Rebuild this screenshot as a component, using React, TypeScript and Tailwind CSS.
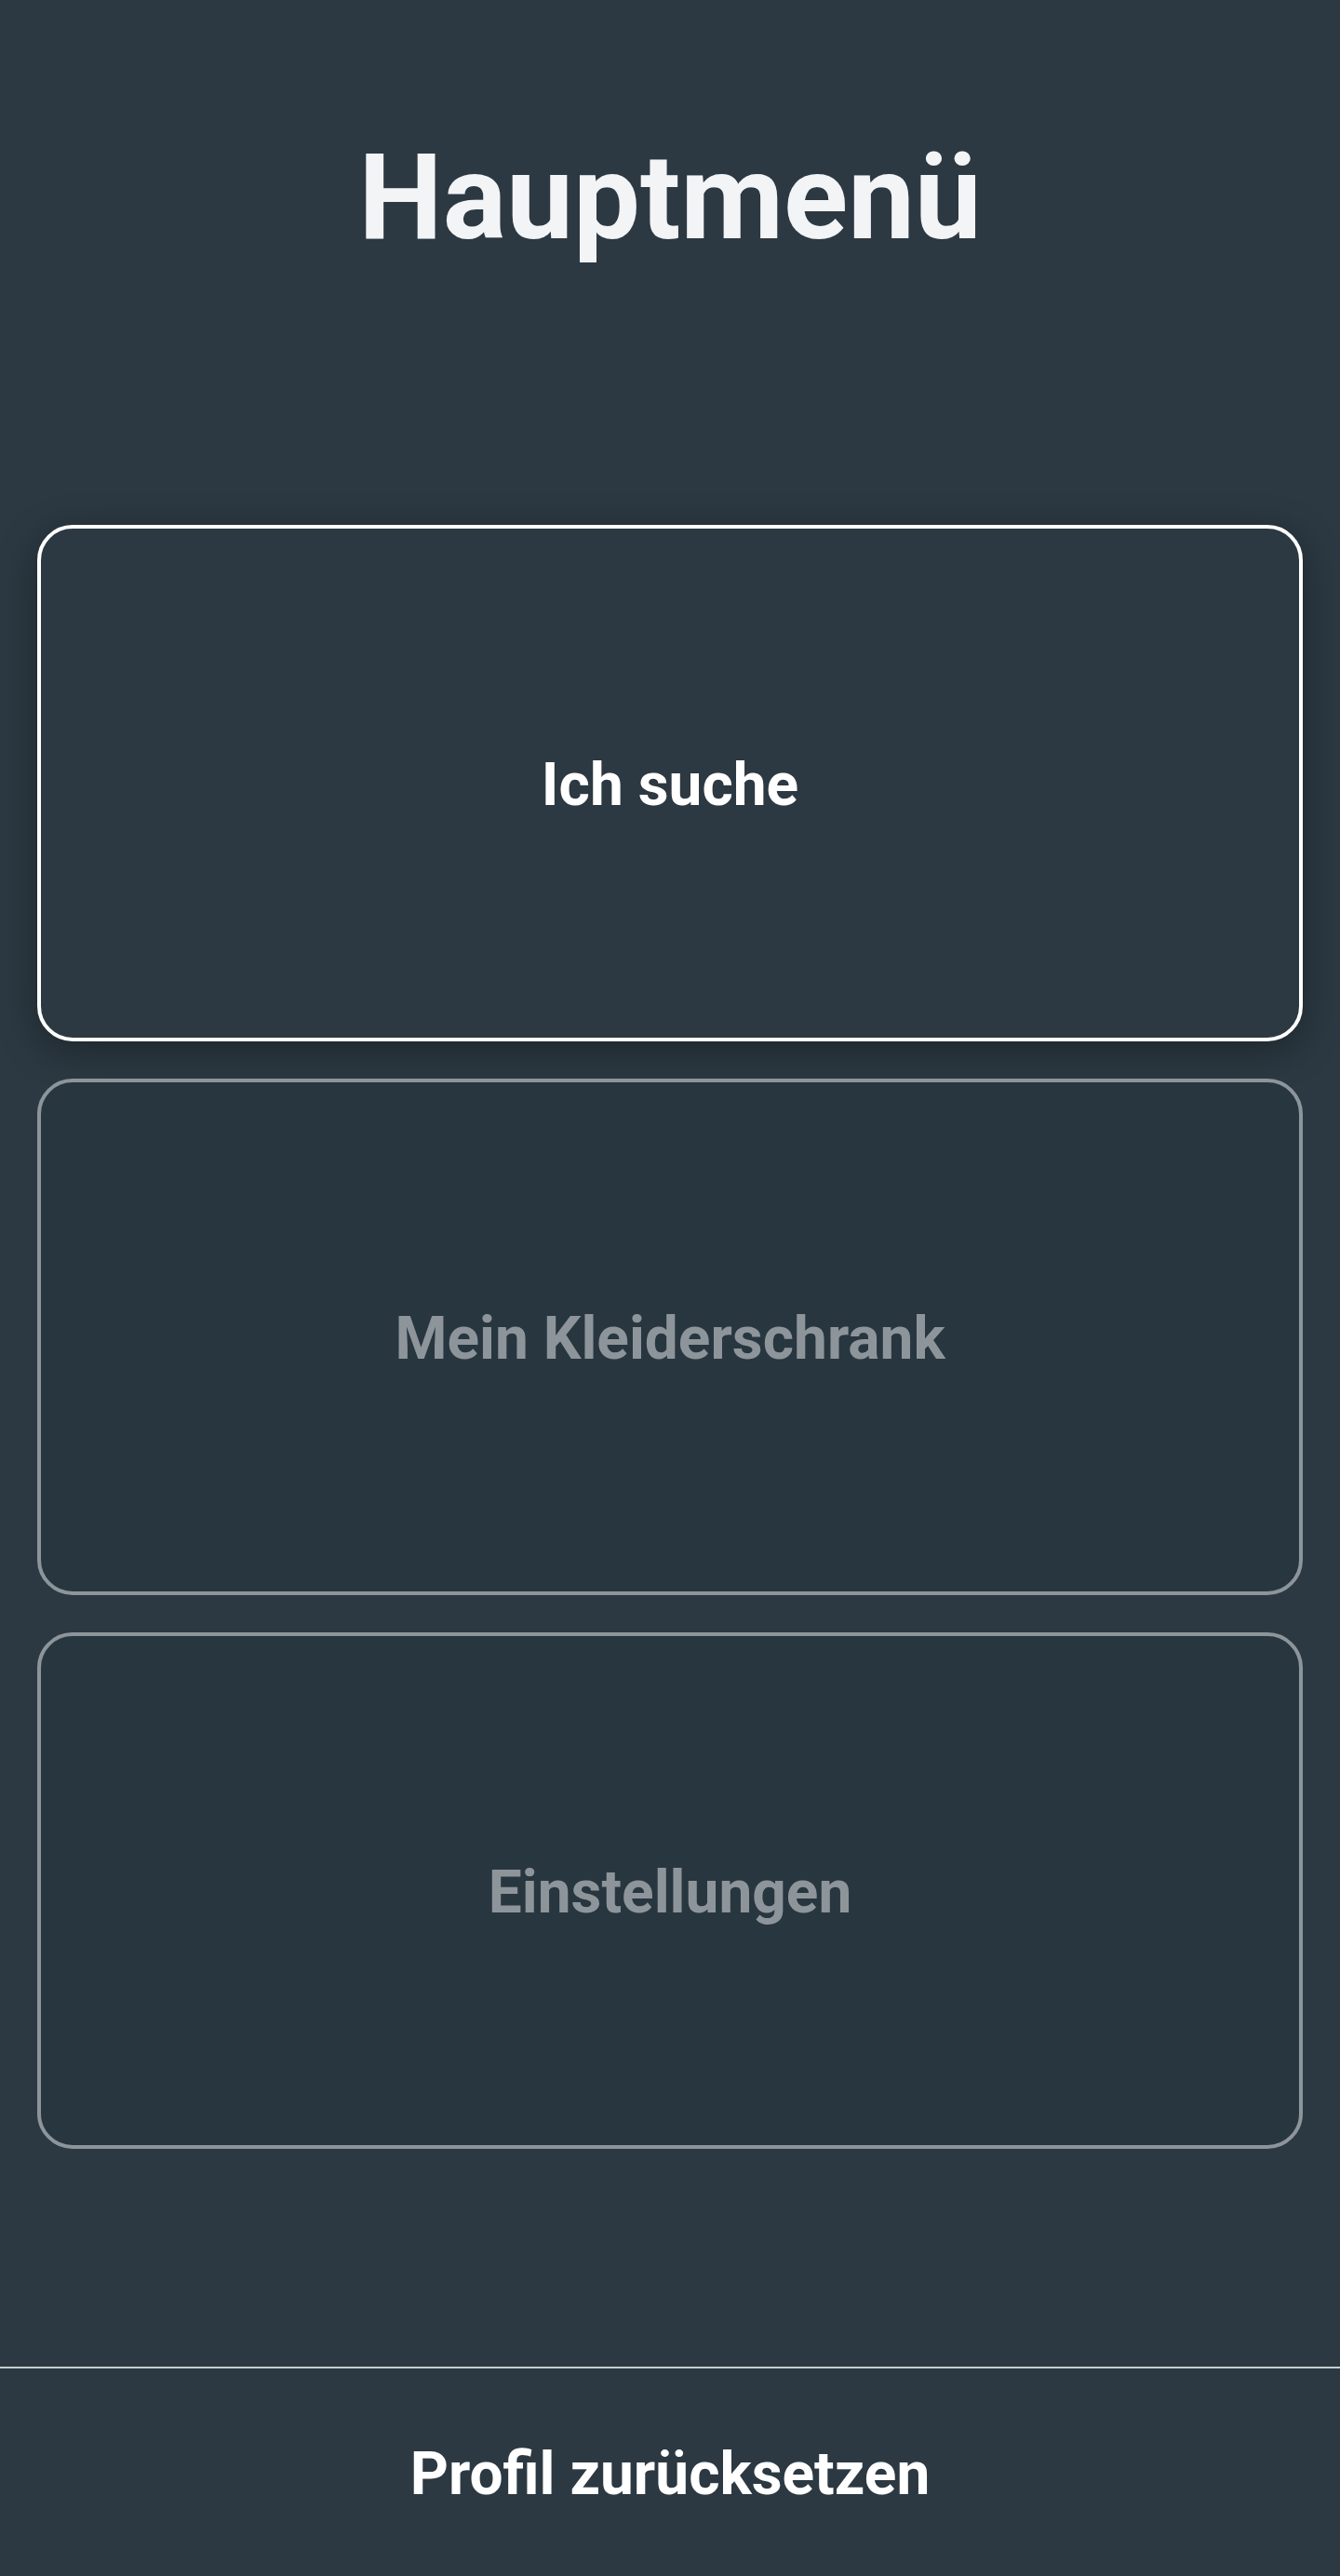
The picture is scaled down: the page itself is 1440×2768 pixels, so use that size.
export default function App() {
  const items = [
    { label: 'Ich suche', active: true },
    { label: 'Mein Kleiderschrank', active: false },
    { label: 'Einstellungen', active: false },
  ]

  return (
    <div className="min-h-[2768px] flex flex-col bg-[#2c3942] text-white" style={{ fontFamily: 'Roboto, "Liberation Sans", sans-serif' }}>
      <header className="pt-[148px]">
        <h1 className="text-[128px] leading-none font-bold text-center text-[#f3f4f6]">Hauptmenü</h1>
      </header>

      <main className="mt-[288px] px-[40px] flex flex-col gap-[40px]">
        {items.map((it) => (
          <button
            key={it.label}
            className={
              it.active
                ? 'h-[555px] pt-[4px] rounded-[38px] border-4 border-white bg-[#2c3942] shadow-[0_10px_40px_rgba(0,0,0,0.35)] flex items-center justify-center'
                : 'h-[555px] pt-[4px] rounded-[38px] border-4 border-[#8d959b] bg-[#283640] flex items-center justify-center'
            }
          >
            <span className={'text-[64px] font-bold ' + (it.active ? 'text-white' : 'text-[#8d959b]')}>{it.label}</span>
          </button>
        ))}
      </main>

      <div className="flex-1" />

      <footer className="h-[225px] pt-[5px] border-t-2 border-[#c9cdd0] flex items-center justify-center">
        <span className="text-[64px] font-bold text-white">Profil zurücksetzen</span>
      </footer>
    </div>
  )
}
